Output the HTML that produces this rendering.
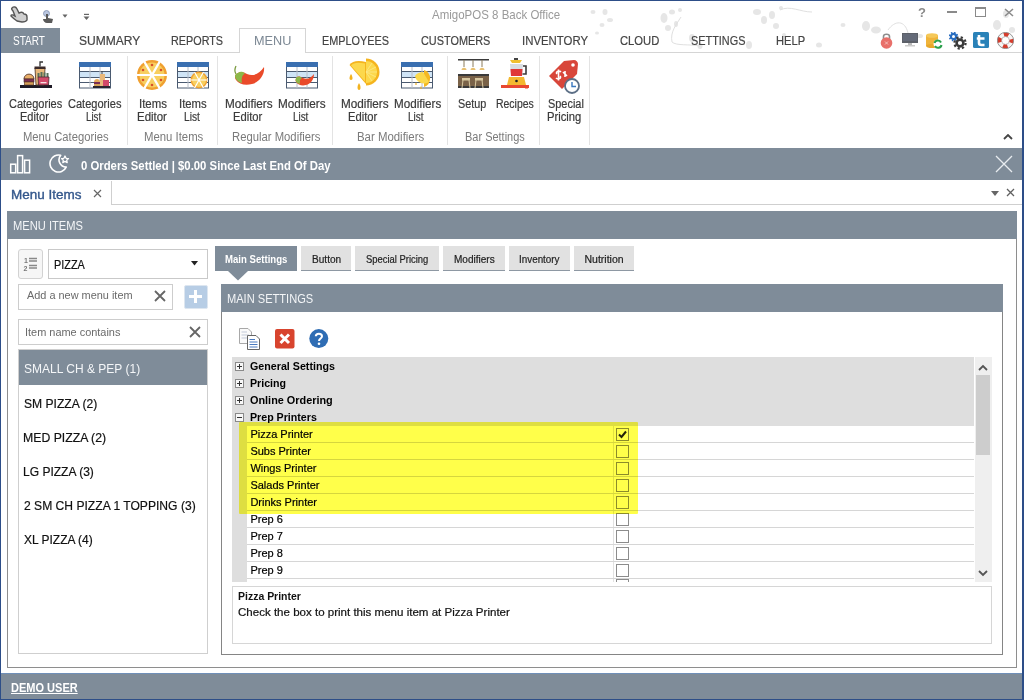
<!DOCTYPE html>
<html><head><meta charset="utf-8"><title>AmigoPOS 8 Back Office</title>
<style>
html,body{margin:0;padding:0;width:1024px;height:700px;overflow:hidden;background:#fff;font-family:'Liberation Sans', sans-serif;}
body{position:relative;}
</style></head><body>
<svg style="position:absolute;left:0px;top:0px;" width="1024" height="60" viewBox="0 0 1024 60"><ellipse cx="593" cy="12" rx="2.5" ry="2" fill="#e6e6e6"/><ellipse cx="605" cy="12" rx="2.5" ry="3" fill="#e6e6e6"/><ellipse cx="610" cy="20" rx="3" ry="2" fill="#e6e6e6"/><ellipse cx="602" cy="25" rx="2.5" ry="2" fill="#e6e6e6"/><ellipse cx="597" cy="33" rx="2" ry="1.5" fill="#e6e6e6"/><ellipse cx="664" cy="18" rx="3.5" ry="5" fill="#e6e6e6"/><ellipse cx="672" cy="12" rx="3" ry="2.5" fill="#e6e6e6"/><ellipse cx="680" cy="10" rx="2" ry="2" fill="#e6e6e6"/><ellipse cx="668" cy="28" rx="3" ry="3" fill="#e6e6e6"/><ellipse cx="676" cy="24" rx="2" ry="3" fill="#e6e6e6"/><ellipse cx="692" cy="38" rx="3" ry="4" fill="#e6e6e6"/><ellipse cx="700" cy="46" rx="2.5" ry="3" fill="#e6e6e6"/><ellipse cx="749" cy="45" rx="3" ry="4" fill="#e6e6e6"/><ellipse cx="757" cy="12" rx="4" ry="3" fill="#e6e6e6"/><ellipse cx="764" cy="20" rx="3" ry="4" fill="#e6e6e6"/><ellipse cx="772" cy="15" rx="3" ry="4" fill="#e6e6e6"/><ellipse cx="776" cy="26" rx="3" ry="3" fill="#e6e6e6"/><ellipse cx="781" cy="8" rx="2" ry="2" fill="#e6e6e6"/><ellipse cx="784" cy="35" rx="2" ry="2" fill="#e6e6e6"/><ellipse cx="819" cy="45" rx="3" ry="2.5" fill="#e6e6e6"/><ellipse cx="843" cy="25" rx="2.5" ry="2" fill="#e6e6e6"/><ellipse cx="866" cy="26" rx="4" ry="5" fill="#e6e6e6"/><ellipse cx="876" cy="30" rx="5" ry="3.5" fill="#e6e6e6"/><ellipse cx="997" cy="25" rx="4" ry="5" fill="#e6e6e6"/><ellipse cx="1006" cy="14" rx="3" ry="4" fill="#e6e6e6"/><ellipse cx="1012" cy="30" rx="3" ry="3" fill="#e6e6e6"/><ellipse cx="920" cy="36" rx="3" ry="2" fill="#e6e6e6"/><path d="M681 17 C676 25 670 32 672 42 C676 46 690 44 700 46 M780 10 C790 5 800 12 812 12 M888 30 C895 20 905 20 908 33" stroke="#e0e0e0" stroke-width="1" fill="none"/></svg>
<svg style="position:absolute;left:9px;top:5px;" width="20" height="18" viewBox="0 0 20 18"><path d="M3 3 C5 1 7 2 8 4 L10 8 C12 7 14 7 15 9 C17 9 18 10 18 12 L18 15 C17 17 15 17 13 17 L8 16 C5 14 3 12 2 11 C2 9 4 10 6 11 L4 6 C3 5 2 4 3 3 Z" fill="#cfcfcf" stroke="#555" stroke-width="1.4"/></svg>
<svg style="position:absolute;left:42px;top:10px;" width="12" height="14" viewBox="0 0 12 14"><circle cx="4.5" cy="3.5" r="3" fill="#b9c6e0" stroke="#8090b0" stroke-width="0.8"/><path d="M4 4 L4 9 L1 9 C1 11 3 13 5 13 L10 13 L11 9 L6 8 L6 4 Z" fill="#5a5a5a"/></svg>
<svg style="position:absolute;left:62px;top:14px;" width="6" height="4" viewBox="0 0 6 4"><path d="M0.5 0.5 L5.5 0.5 L3 3.8 Z" fill="#666"/></svg>
<svg style="position:absolute;left:83px;top:13px;" width="7" height="8" viewBox="0 0 7 8"><rect x="1" y="0.8" width="5" height="1.2" fill="#666"/><path d="M0.5 3.5 L6.5 3.5 L3.5 7 Z" fill="#666"/></svg>
<div style="position:absolute;left:432.00px;top:7.95px;font:400 13px/13px 'Liberation Sans', sans-serif;color:#9a9a9a;white-space:nowrap;transform:scaleX(0.8842);transform-origin:0 0;">AmigoPOS 8 Back Office</div>
<svg style="position:absolute;left:915px;top:5px;" width="14" height="14" viewBox="0 0 14 14"><text x="7" y="12" font-family="Liberation Sans" font-weight="700" font-size="13" fill="#8a8a8a" text-anchor="middle">?</text></svg>
<div style="position:absolute;left:947px;top:11px;width:10px;height:2px;background:#8a8a8a;"></div>
<div style="position:absolute;left:975px;top:7px;width:9px;height:8px;border:1px solid #8a8a8a;background:transparent;border-top-width:2px;height:7px;"></div>
<svg style="position:absolute;left:1004px;top:8px;" width="10" height="9" viewBox="0 0 10 9"><path d="M1 1 L9 8 M9 1 L1 8" stroke="#8a8a8a" stroke-width="1.6"/></svg>
<svg style="position:absolute;left:880px;top:32px;" width="13" height="17" viewBox="0 0 13 17"><path d="M3.5 7 L3.5 4.5 C3.5 1.5 9.5 1.5 9.5 4.5 L9.5 7" stroke="#8d8d8d" stroke-width="1.6" fill="none"/><circle cx="6.5" cy="11" r="5.8" fill="#e8706a"/><path d="M5 9.5 L8 12.5 M8 9.5 L5 12.5" stroke="#f6c0bc" stroke-width="1"/></svg>
<svg style="position:absolute;left:902px;top:33px;" width="17" height="15" viewBox="0 0 17 15"><rect x="0" y="0" width="16" height="10" fill="#5c6068"/><rect x="1" y="1" width="14" height="7" fill="#646a78"/><rect x="6" y="10" width="4" height="2" fill="#bbb"/><rect x="3" y="12" width="10" height="1.5" fill="#ccc"/></svg>
<svg style="position:absolute;left:926px;top:33px;" width="17" height="16" viewBox="0 0 17 16"><rect x="0" y="2" width="12" height="11" fill="#f0b43a"/><ellipse cx="6" cy="2.5" rx="6" ry="2.3" fill="#f5c858"/><ellipse cx="6" cy="13" rx="6" ry="2" fill="#e8a82a"/><circle cx="12" cy="11" r="4.5" fill="#fff"/><path d="M8.5 10 A3.5 3.5 0 0 1 15 9.5 M15.5 12 A3.5 3.5 0 0 1 9 13" stroke="#2aa04a" stroke-width="2" fill="none"/></svg>
<svg style="position:absolute;left:949px;top:32px;" width="18" height="18" viewBox="0 0 18 18"><circle cx="4.5" cy="4.5" r="2.6" fill="none" stroke="#2a6ec0" stroke-width="2.2"/><circle cx="4.5" cy="4.5" r="4" fill="none" stroke="#2a6ec0" stroke-width="1.6" stroke-dasharray="1.5 1.65"/><circle cx="11" cy="11" r="3.4" fill="none" stroke="#3a3a3a" stroke-width="2.6"/><circle cx="11" cy="11" r="5.6" fill="none" stroke="#3a3a3a" stroke-width="2.2" stroke-dasharray="2.2 2.2"/></svg>
<svg style="position:absolute;left:973px;top:32px;" width="17" height="16" viewBox="0 0 17 16"><rect x="0" y="0" width="16" height="16" rx="1.5" fill="#2a82b8"/><path d="M6 3 L6 11 C6 12.5 7 13 8.5 13 L11.5 13 M3.8 6.5 L11.5 6.5" stroke="#fff" stroke-width="2.6" fill="none"/></svg>
<svg style="position:absolute;left:997px;top:32px;" width="17" height="17" viewBox="0 0 17 17"><circle cx="8.5" cy="8.5" r="6" fill="none" stroke="#f6f6f6" stroke-width="4.2"/><circle cx="8.5" cy="8.5" r="6" fill="none" stroke="#d63c2c" stroke-width="4.2" stroke-dasharray="4.7 4.72" stroke-dashoffset="2.35"/><circle cx="8.5" cy="8.5" r="8.1" fill="none" stroke="#8a8a8a" stroke-width="0.9"/><circle cx="8.5" cy="8.5" r="3.9" fill="none" stroke="#9a9a9a" stroke-width="0.6"/></svg>
<div style="position:absolute;left:1px;top:28px;width:59px;height:25px;background:#7f8c99;"></div>
<div style="position:absolute;left:13.00px;top:33.95px;font:400 13px/13px 'Liberation Sans', sans-serif;color:#ffffff;white-space:nowrap;transform:scaleX(0.7716);transform-origin:0 0;">START</div>
<div style="position:absolute;left:60px;top:52px;width:963px;height:1px;background:#d5d5d5;"></div>
<div style="position:absolute;left:239px;top:28px;width:65px;height:24px;border:1px solid #d5d5d5;border-bottom:none;background:#fff;"></div>
<div style="position:absolute;left:79.00px;top:33.95px;font:400 13px/13px 'Liberation Sans', sans-serif;color:#444;white-space:nowrap;transform:scaleX(0.9257);transform-origin:0 0;-webkit-text-stroke:0.2px #444;">SUMMARY</div>
<div style="position:absolute;left:171.17px;top:33.95px;font:400 13px/13px 'Liberation Sans', sans-serif;color:#444;white-space:nowrap;transform:scaleX(0.8315);transform-origin:0 0;-webkit-text-stroke:0.2px #444;">REPORTS</div>
<div style="position:absolute;left:253.72px;top:33.95px;font:400 13px/13px 'Liberation Sans', sans-serif;color:#7c8894;white-space:nowrap;transform:scaleX(0.9759);transform-origin:0 0;">MENU</div>
<div style="position:absolute;left:321.66px;top:33.95px;font:400 13px/13px 'Liberation Sans', sans-serif;color:#444;white-space:nowrap;transform:scaleX(0.8362);transform-origin:0 0;-webkit-text-stroke:0.2px #444;">EMPLOYEES</div>
<div style="position:absolute;left:421.00px;top:33.95px;font:400 13px/13px 'Liberation Sans', sans-serif;color:#444;white-space:nowrap;transform:scaleX(0.8370);transform-origin:0 0;-webkit-text-stroke:0.2px #444;">CUSTOMERS</div>
<div style="position:absolute;left:521.62px;top:33.95px;font:400 13px/13px 'Liberation Sans', sans-serif;color:#444;white-space:nowrap;transform:scaleX(0.8768);transform-origin:0 0;-webkit-text-stroke:0.2px #444;">INVENTORY</div>
<div style="position:absolute;left:620.30px;top:33.95px;font:400 13px/13px 'Liberation Sans', sans-serif;color:#444;white-space:nowrap;transform:scaleX(0.8644);transform-origin:0 0;-webkit-text-stroke:0.2px #444;">CLOUD</div>
<div style="position:absolute;left:690.60px;top:33.95px;font:400 13px/13px 'Liberation Sans', sans-serif;color:#444;white-space:nowrap;transform:scaleX(0.8372);transform-origin:0 0;-webkit-text-stroke:0.2px #444;">SETTINGS</div>
<div style="position:absolute;left:776.14px;top:33.95px;font:400 13px/13px 'Liberation Sans', sans-serif;color:#444;white-space:nowrap;transform:scaleX(0.8579);transform-origin:0 0;-webkit-text-stroke:0.2px #444;">HELP</div>
<div style="position:absolute;left:127px;top:56px;width:1px;height:89px;background:#e3e3e3;"></div>
<div style="position:absolute;left:217px;top:56px;width:1px;height:89px;background:#e3e3e3;"></div>
<div style="position:absolute;left:332px;top:56px;width:1px;height:89px;background:#e3e3e3;"></div>
<div style="position:absolute;left:447px;top:56px;width:1px;height:89px;background:#e3e3e3;"></div>
<div style="position:absolute;left:539px;top:56px;width:1px;height:89px;background:#e3e3e3;"></div>
<div style="position:absolute;left:589px;top:56px;width:1px;height:89px;background:#e3e3e3;"></div>
<div style="position:absolute;left:8.90px;top:97.60px;font:400 12px/12px 'Liberation Sans', sans-serif;color:#3a3a3a;white-space:nowrap;transform:scaleX(0.9167);transform-origin:0 0;-webkit-text-stroke:0.2px #3a3a3a;">Categories</div>
<div style="position:absolute;left:19.90px;top:110.60px;font:400 12px/12px 'Liberation Sans', sans-serif;color:#3a3a3a;white-space:nowrap;transform:scaleX(0.9186);transform-origin:0 0;-webkit-text-stroke:0.2px #3a3a3a;">Editor</div>
<div style="position:absolute;left:68.00px;top:97.60px;font:400 12px/12px 'Liberation Sans', sans-serif;color:#3a3a3a;white-space:nowrap;transform:scaleX(0.9202);transform-origin:0 0;-webkit-text-stroke:0.2px #3a3a3a;">Categories</div>
<div style="position:absolute;left:85.50px;top:110.60px;font:400 12px/12px 'Liberation Sans', sans-serif;color:#3a3a3a;white-space:nowrap;transform:scaleX(0.8118);transform-origin:0 0;-webkit-text-stroke:0.2px #3a3a3a;">List</div>
<div style="position:absolute;left:22.70px;top:131.00px;font:400 12px/12px 'Liberation Sans', sans-serif;color:#7a7a7a;white-space:nowrap;transform:scaleX(0.9367);transform-origin:0 0;">Menu Categories</div>
<div style="position:absolute;left:138.95px;top:97.60px;font:400 12px/12px 'Liberation Sans', sans-serif;color:#3a3a3a;white-space:nowrap;transform:scaleX(0.9528);transform-origin:0 0;-webkit-text-stroke:0.2px #3a3a3a;">Items</div>
<div style="position:absolute;left:137.00px;top:110.60px;font:400 12px/12px 'Liberation Sans', sans-serif;color:#3a3a3a;white-space:nowrap;transform:scaleX(0.9537);transform-origin:0 0;-webkit-text-stroke:0.2px #3a3a3a;">Editor</div>
<div style="position:absolute;left:179.06px;top:97.60px;font:400 12px/12px 'Liberation Sans', sans-serif;color:#3a3a3a;white-space:nowrap;transform:scaleX(0.9422);transform-origin:0 0;-webkit-text-stroke:0.2px #3a3a3a;">Items</div>
<div style="position:absolute;left:184.00px;top:110.60px;font:400 12px/12px 'Liberation Sans', sans-serif;color:#3a3a3a;white-space:nowrap;transform:scaleX(0.8480);transform-origin:0 0;-webkit-text-stroke:0.2px #3a3a3a;">List</div>
<div style="position:absolute;left:143.70px;top:131.00px;font:400 12px/12px 'Liberation Sans', sans-serif;color:#7a7a7a;white-space:nowrap;transform:scaleX(0.9459);transform-origin:0 0;">Menu Items</div>
<div style="position:absolute;left:225.20px;top:97.60px;font:400 12px/12px 'Liberation Sans', sans-serif;color:#3a3a3a;white-space:nowrap;transform:scaleX(0.9778);transform-origin:0 0;-webkit-text-stroke:0.2px #3a3a3a;">Modifiers</div>
<div style="position:absolute;left:232.70px;top:110.60px;font:400 12px/12px 'Liberation Sans', sans-serif;color:#3a3a3a;white-space:nowrap;transform:scaleX(0.9346);transform-origin:0 0;-webkit-text-stroke:0.2px #3a3a3a;">Editor</div>
<div style="position:absolute;left:278.40px;top:97.60px;font:400 12px/12px 'Liberation Sans', sans-serif;color:#3a3a3a;white-space:nowrap;transform:scaleX(0.9778);transform-origin:0 0;-webkit-text-stroke:0.2px #3a3a3a;">Modifiers</div>
<div style="position:absolute;left:292.50px;top:110.60px;font:400 12px/12px 'Liberation Sans', sans-serif;color:#3a3a3a;white-space:nowrap;transform:scaleX(0.8221);transform-origin:0 0;-webkit-text-stroke:0.2px #3a3a3a;">List</div>
<div style="position:absolute;left:231.60px;top:131.00px;font:400 12px/12px 'Liberation Sans', sans-serif;color:#7a7a7a;white-space:nowrap;transform:scaleX(0.9411);transform-origin:0 0;">Regular Modifiers</div>
<div style="position:absolute;left:340.50px;top:97.60px;font:400 12px/12px 'Liberation Sans', sans-serif;color:#3a3a3a;white-space:nowrap;transform:scaleX(0.9778);transform-origin:0 0;-webkit-text-stroke:0.2px #3a3a3a;">Modifiers</div>
<div style="position:absolute;left:348.30px;top:110.60px;font:400 12px/12px 'Liberation Sans', sans-serif;color:#3a3a3a;white-space:nowrap;transform:scaleX(0.9346);transform-origin:0 0;-webkit-text-stroke:0.2px #3a3a3a;">Editor</div>
<div style="position:absolute;left:393.50px;top:97.60px;font:400 12px/12px 'Liberation Sans', sans-serif;color:#3a3a3a;white-space:nowrap;transform:scaleX(0.9717);transform-origin:0 0;-webkit-text-stroke:0.2px #3a3a3a;">Modifiers</div>
<div style="position:absolute;left:407.60px;top:110.60px;font:400 12px/12px 'Liberation Sans', sans-serif;color:#3a3a3a;white-space:nowrap;transform:scaleX(0.8325);transform-origin:0 0;-webkit-text-stroke:0.2px #3a3a3a;">List</div>
<div style="position:absolute;left:357.20px;top:131.00px;font:400 12px/12px 'Liberation Sans', sans-serif;color:#7a7a7a;white-space:nowrap;transform:scaleX(0.9507);transform-origin:0 0;">Bar Modifiers</div>
<div style="position:absolute;left:458.30px;top:97.60px;font:400 12px/12px 'Liberation Sans', sans-serif;color:#3a3a3a;white-space:nowrap;transform:scaleX(0.9026);transform-origin:0 0;-webkit-text-stroke:0.2px #3a3a3a;">Setup</div>
<div style="position:absolute;left:495.50px;top:97.60px;font:400 12px/12px 'Liberation Sans', sans-serif;color:#3a3a3a;white-space:nowrap;transform:scaleX(0.8719);transform-origin:0 0;-webkit-text-stroke:0.2px #3a3a3a;">Recipes</div>
<div style="position:absolute;left:464.60px;top:131.00px;font:400 12px/12px 'Liberation Sans', sans-serif;color:#7a7a7a;white-space:nowrap;transform:scaleX(0.9148);transform-origin:0 0;">Bar Settings</div>
<div style="position:absolute;left:547.80px;top:97.60px;font:400 12px/12px 'Liberation Sans', sans-serif;color:#3a3a3a;white-space:nowrap;transform:scaleX(0.9098);transform-origin:0 0;-webkit-text-stroke:0.2px #3a3a3a;">Special</div>
<div style="position:absolute;left:547.30px;top:110.60px;font:400 12px/12px 'Liberation Sans', sans-serif;color:#3a3a3a;white-space:nowrap;transform:scaleX(0.9360);transform-origin:0 0;-webkit-text-stroke:0.2px #3a3a3a;">Pricing</div>
<svg style="position:absolute;left:1003px;top:134px;" width="10" height="6" viewBox="0 0 10 6"><path d="M1 5 L5 1 L9 5" stroke="#444" stroke-width="1.8" fill="none"/></svg>
<svg style="position:absolute;left:19px;top:60px;" width="34" height="29" viewBox="0 0 34 29"><rect x="1" y="25" width="32" height="3" fill="#1e1a26"/><path d="M5 19 C5 12.5 15 12.5 15 19 Z" fill="#eab06a" stroke="#5a3a2a" stroke-width="0.9"/><rect x="5" y="19" width="10" height="3" fill="#7b2e52" stroke="#4a2a30" stroke-width="0.6"/><rect x="5.3" y="22" width="9.4" height="3" fill="#d6a058" stroke="#5a3a2a" stroke-width="0.6"/><path d="M16 8 H26 L25 25 H17 Z" fill="#e8b87a" stroke="#5a4030" stroke-width="0.9"/><rect x="15.5" y="6.5" width="11" height="2.5" fill="#3a2a2a"/><path d="M21 6.5 V2 H24" stroke="#333" stroke-width="1.3" fill="none"/><path d="M19.5 13 V17 M22.5 12 V17 M25.5 12.5 V17 M28.5 13 V17" stroke="#56705a" stroke-width="2"/><path d="M19 17 H30 L29.5 25 H19.5 Z" fill="#d24a6a" stroke="#4a2a30" stroke-width="0.8"/><rect x="21.5" y="22" width="6" height="1.3" fill="#f8e0e4"/></svg>
<svg style="position:absolute;left:79px;top:62px;" width="32" height="27" viewBox="0 0 32 27"><rect x="0.5" y="0.5" width="31" height="25.5" fill="#fff" stroke="#4a5a70" stroke-width="1"/><rect x="0" y="0" width="32" height="5" fill="#3a6fb0"/><rect x="1" y="10" width="30" height="5" fill="#cfe4f6"/><path d="M1 9.5 H31 M1 15.5 H31 M1 20.5 H31" stroke="#4a5a70" stroke-width="1" fill="none"/><path d="M11 5 V26 M21 5 V26" stroke="#b8bec8" stroke-width="1" fill="none"/></svg>
<svg style="position:absolute;left:93px;top:70px;" width="17" height="18" viewBox="0 0 17 18"><rect x="0" y="16" width="17" height="2" fill="#2a2630"/><path d="M1 12 C1 8 7 8 7 12 Z" fill="#e6ac5c"/><rect x="1" y="12" width="6" height="2" fill="#7b2e52"/><rect x="1" y="14" width="6" height="2" fill="#d6a058"/><rect x="7" y="4" width="5" height="12" fill="#e8b87a"/><rect x="10" y="10" width="6" height="6" fill="#d24a6a"/><path d="M9 4 V1" stroke="#444" stroke-width="1"/></svg>
<svg style="position:absolute;left:136px;top:59px;" width="32" height="32" viewBox="0 0 32 32"><circle cx="16" cy="16" r="15" fill="#f0a030"/><circle cx="16" cy="16" r="12.5" fill="#f8cf60"/><path d="M0 16 H32 M8 2.1 L24 29.9 M24 2.1 L8 29.9" stroke="#fff" stroke-width="2.2"/><g fill="#d8502a"><circle cx="16" cy="6" r="1.3"/><circle cx="25" cy="11" r="1.3"/><circle cx="25" cy="21" r="1.3"/><circle cx="16" cy="26" r="1.3"/><circle cx="7" cy="21" r="1.3"/><circle cx="7" cy="11" r="1.3"/></g></svg>
<svg style="position:absolute;left:177px;top:62px;" width="32" height="27" viewBox="0 0 32 27"><rect x="0.5" y="0.5" width="31" height="25.5" fill="#fff" stroke="#4a5a70" stroke-width="1"/><rect x="0" y="0" width="32" height="5" fill="#3a6fb0"/><rect x="1" y="10" width="30" height="5" fill="#cfe4f6"/><path d="M1 9.5 H31 M1 15.5 H31 M1 20.5 H31" stroke="#4a5a70" stroke-width="1" fill="none"/><path d="M11 5 V26 M21 5 V26" stroke="#b8bec8" stroke-width="1" fill="none"/></svg>
<svg style="position:absolute;left:190px;top:71px;" width="18" height="18" viewBox="0 0 18 18"><circle cx="9" cy="9" r="8.5" fill="#f0a030"/><circle cx="9" cy="9" r="7" fill="#f8cf60"/><path d="M0 9 H18 M4.5 1 L13.5 17 M13.5 1 L4.5 17" stroke="#fff" stroke-width="1.2"/></svg>
<svg style="position:absolute;left:230px;top:64px;" width="36" height="24" viewBox="0 0 36 24"><path d="M8 9 C10 7 14 8 17 10 C24 13 30 9 34 3 C35 10 30 18 22 20 C15 22 9 20 6 16 C4 13 5 10 8 9 Z" fill="#ea4a2a"/><path d="M8 9 C10 7 13 7.5 15 9.5 C12 11 11 15 12 19 C8 18 5 15 5 12 C5 10.5 6.5 9.5 8 9 Z" fill="#8cb848"/><path d="M6 10 C4 7 5 4 6 2" stroke="#7a9a40" stroke-width="1.3" fill="none"/></svg>
<svg style="position:absolute;left:286px;top:62px;" width="32" height="27" viewBox="0 0 32 27"><rect x="0.5" y="0.5" width="31" height="25.5" fill="#fff" stroke="#4a5a70" stroke-width="1"/><rect x="0" y="0" width="32" height="5" fill="#3a6fb0"/><rect x="1" y="10" width="30" height="5" fill="#cfe4f6"/><path d="M1 9.5 H31 M1 15.5 H31 M1 20.5 H31" stroke="#4a5a70" stroke-width="1" fill="none"/><path d="M11 5 V26 M21 5 V26" stroke="#b8bec8" stroke-width="1" fill="none"/></svg>
<svg style="position:absolute;left:293px;top:73px;" width="22" height="15" viewBox="0 0 22 15"><path d="M4 4 C6 3 8 4 10 5 C14 7 18 5 21 1 C21 6 18 11 13 12 C9 13 5 12 3 9 C2 7 3 5 4 4 Z" fill="#ea4a2a"/><path d="M4 4 C6 3 7.5 3.5 9 5 C7 6 6.5 8 7 11 C4.5 10.5 3 9 2.5 7.5 C2.5 6 3 4.5 4 4 Z" fill="#8cb848"/></svg>
<svg style="position:absolute;left:346px;top:57px;" width="36" height="34" viewBox="0 0 36 34"><path d="M3.5 8 C6 4 12 3 20 5 L20 27 Z" fill="#f5b41e"/><path d="M5 8.5 C7.5 5.5 12 5 19 6.5 L19 24.5 Z" fill="#fcd84c"/><path d="M20 1.5 A13.5 13.5 0 0 1 20 28.5 Z" fill="#f5b41e"/><path d="M20 4 A11 11 0 0 1 20 26 Z" fill="#fcd84c"/><path d="M20 15 L30 10 M20 15 L31 15 M20 15 L30 20 M20 15 L26 6 M20 15 L26 24" stroke="#fde98a" stroke-width="0.8"/><path d="M5 17 C3 20 3 23 5 23 C7 23 7 20 5 17 Z" fill="#f2b21e"/><path d="M13 26 C11 29 11 33 13 33 C15 33 15 29 13 26 Z" fill="#f2b21e"/></svg>
<svg style="position:absolute;left:401px;top:62px;" width="32" height="27" viewBox="0 0 32 27"><rect x="0.5" y="0.5" width="31" height="25.5" fill="#fff" stroke="#4a5a70" stroke-width="1"/><rect x="0" y="0" width="32" height="5" fill="#3a6fb0"/><rect x="1" y="10" width="30" height="5" fill="#cfe4f6"/><path d="M1 9.5 H31 M1 15.5 H31 M1 20.5 H31" stroke="#4a5a70" stroke-width="1" fill="none"/><path d="M11 5 V26 M21 5 V26" stroke="#b8bec8" stroke-width="1" fill="none"/></svg>
<svg style="position:absolute;left:414px;top:69px;" width="20" height="20" viewBox="0 0 20 20"><path d="M10 1 A9 9 0 0 1 10 18 Z" fill="#f5b820"/><path d="M1 7 A9 9 0 0 0 15 13 L9 3 C6 3 3 4 1 7 Z" fill="#fbd84a"/><path d="M2 13 C1 15 1 16 2 16 C3 16 3 15 2 13 Z" fill="#f0b020"/><path d="M7 17 C6 19 6 20 7 20 C8 20 8 19 7 17 Z" fill="#f0b020"/></svg>
<svg style="position:absolute;left:457px;top:58px;" width="33" height="33" viewBox="0 0 33 33"><rect x="1" y="1" width="31" height="1.5" fill="#3a3a3a"/><path d="M7 2 V9 M16 2 V9 M25 2 V9" stroke="#8a7a5a" stroke-width="1"/><g fill="#e8c070"><path d="M4.5 12 C4.5 9 9.5 9 9.5 12 Z"/><path d="M13.5 12 C13.5 9 18.5 9 18.5 12 Z"/><path d="M22.5 12 C22.5 9 27.5 9 27.5 12 Z"/></g><rect x="1" y="16" width="31" height="2" fill="#3a3a3a"/><rect x="1" y="18" width="31" height="10" fill="#7a6248"/><rect x="1" y="28" width="31" height="2" fill="#3a3a3a"/><g fill="#d8c8a0"><rect x="5" y="20" width="8" height="2.5"/><rect x="18" y="20" width="8" height="2.5"/></g><path d="M6 22 L5 30 M12 22 L13 30 M19 22 L18 30 M25 22 L26 30" stroke="#d8c8a0" stroke-width="1"/></svg>
<svg style="position:absolute;left:497px;top:57px;" width="35" height="34" viewBox="0 0 35 34"><path d="M13 3 H25 L23 6 H15 Z" fill="#f0c030"/><rect x="17" y="1" width="4" height="2" fill="#444"/><path d="M13 7 H26 L25 19 H14 Z" fill="#d8dde2"/><path d="M13.5 12 H25.5 L25 19 H14 Z" fill="#e03838"/><path d="M26 9 H29 V17 H25.5" stroke="#3a3a3a" stroke-width="1.6" fill="none"/><path d="M12 20 H27 L29 28 H10 Z" fill="#f4b830"/><circle cx="19.5" cy="24" r="1.3" fill="#222"/><rect x="4" y="28" width="28" height="3" fill="#e84830"/><rect x="28" y="30" width="3" height="1.5" fill="#e84830"/></svg>
<svg style="position:absolute;left:543px;top:58px;" width="40" height="36" viewBox="0 0 40 36"><path d="M6 18 L21 3 L31 2 C33 2 35 4 35 6 L34 16 L19 31 Z" fill="#d8463a"/><circle cx="30" cy="7" r="1.8" fill="#fff"/><path d="M14 16 C12 14 16 12 18 14 M13 20 C15 22 19 20 17 18 M15.5 11.5 L15.5 22.5 M20 14 L24 18 M22 13 L22 19" stroke="#fff" stroke-width="1.6" fill="none"/><circle cx="29" cy="28" r="7" fill="#fff" stroke="#5c6f86" stroke-width="1.8"/><path d="M29 24 V28.5 H33" stroke="#3a78c0" stroke-width="1.4" fill="none"/></svg>
<div style="position:absolute;left:1px;top:148px;width:1022px;height:32px;background:#7f8c99;"></div>
<svg style="position:absolute;left:9px;top:154px;" width="23" height="20" viewBox="0 0 23 20"><rect x="1.7" y="10.2" width="5" height="8.6" fill="none" stroke="#fff" stroke-width="1.5"/><rect x="8.6" y="1.6" width="5" height="17.2" fill="none" stroke="#fff" stroke-width="1.5"/><rect x="15.6" y="6.2" width="5" height="12.6" fill="none" stroke="#fff" stroke-width="1.5"/></svg>
<svg style="position:absolute;left:49px;top:153px;" width="22" height="22" viewBox="0 0 22 22"><path d="M11.7 2.3 A8.5 8.5 0 1 0 17.2 14.1 A7.2 7.2 0 0 1 11.7 2.3 Z" fill="none" stroke="#fff" stroke-width="1.6" stroke-linejoin="round"/><path d="M16 3 L17.1 5.3 L19.5 5.6 L17.7 7.2 L18.2 9.6 L16 8.4 L13.8 9.6 L14.3 7.2 L12.5 5.6 L14.9 5.3 Z" fill="none" stroke="#fff" stroke-width="1.3" stroke-linejoin="round"/></svg>
<div style="position:absolute;left:81.40px;top:159.25px;font:700 13px/13px 'Liberation Sans', sans-serif;color:#ffffff;white-space:nowrap;transform:scaleX(0.8721);transform-origin:0 0;">0 Orders Settled | $0.00 Since Last End Of Day</div>
<svg style="position:absolute;left:995px;top:155px;" width="18" height="18" viewBox="0 0 18 18"><path d="M1 1 L17 17 M17 1 L1 17" stroke="#e8ecf0" stroke-width="1.3"/></svg>
<div style="position:absolute;left:111px;top:181px;width:1px;height:24px;background:#cfcfcf;"></div>
<div style="position:absolute;left:111px;top:204px;width:912px;height:1px;background:#cfcfcf;"></div>
<div style="position:absolute;left:10.52px;top:188.78px;font:400 12.5px/12.5px 'Liberation Sans', sans-serif;color:#33578c;white-space:nowrap;transform:scaleX(1.0788);transform-origin:0 0;-webkit-text-stroke:0.2px #33578c;-webkit-text-stroke:0.35px #33578c;">Menu Items</div>
<svg style="position:absolute;left:93px;top:189px;" width="9" height="9" viewBox="0 0 9 9"><path d="M1 1 L8 8 M8 1 L1 8" stroke="#666" stroke-width="1.2"/></svg>
<svg style="position:absolute;left:991px;top:191px;" width="9" height="6" viewBox="0 0 9 6"><path d="M0 0 L8 0 L4 5 Z" fill="#666"/></svg>
<svg style="position:absolute;left:1006px;top:188px;" width="9" height="9" viewBox="0 0 9 9"><path d="M1 1 L8 8 M8 1 L1 8" stroke="#606060" stroke-width="1.3"/></svg>
<div style="position:absolute;left:7px;top:211px;width:1008px;height:456px;border:1px solid #8e8e8e;border-top:none;"></div>
<div style="position:absolute;left:7px;top:211px;width:1010px;height:28px;background:#7f8c99;"></div>
<div style="position:absolute;left:12.61px;top:220.18px;font:400 12.5px/12.5px 'Liberation Sans', sans-serif;color:#f4f6f8;white-space:nowrap;transform:scaleX(0.8919);transform-origin:0 0;">MENU ITEMS</div>
<div style="position:absolute;left:18px;top:249px;width:23px;height:28px;border:1px solid #d2d2d2;border-radius:3px;background:#f6f6f6;"></div>
<svg style="position:absolute;left:23px;top:256px;" width="15" height="16" viewBox="0 0 15 16"><text x="1" y="7" font-family="Liberation Sans" font-weight="700" font-size="7" fill="#777">1</text><text x="0.5" y="14.5" font-family="Liberation Sans" font-weight="700" font-size="7" fill="#777">2</text><path d="M6 2.5 H14 M6 5 H14 M6 9.5 H14 M6 12 H14" stroke="#888" stroke-width="1.3"/></svg>
<div style="position:absolute;left:48px;top:249px;width:158px;height:28px;border:1px solid #c9c9c9;background:#fff;"></div>
<div style="position:absolute;left:53.63px;top:258.57px;font:400 12.5px/12.5px 'Liberation Sans', sans-serif;color:#111;white-space:nowrap;transform:scaleX(0.8694);transform-origin:0 0;-webkit-text-stroke:0.2px #111;">PIZZA</div>
<svg style="position:absolute;left:191px;top:261px;" width="8" height="5" viewBox="0 0 8 5"><path d="M0 0 L7 0 L3.5 4.5 Z" fill="#222"/></svg>
<div style="position:absolute;left:18px;top:284px;width:153px;height:24px;border:1px solid #cdcdcd;background:#fff;"></div>
<div style="position:absolute;left:26.60px;top:289.83px;font:400 11.5px/11.5px 'Liberation Sans', sans-serif;color:#6a6a6a;white-space:nowrap;transform:scaleX(0.9490);transform-origin:0 0;">Add a new menu item</div>
<svg style="position:absolute;left:154px;top:290px;" width="12" height="12" viewBox="0 0 12 12"><path d="M1 1 L11 11 M11 1 L1 11" stroke="#666" stroke-width="1.8"/></svg>
<div style="position:absolute;left:184px;top:285px;width:22px;height:22px;border:1px solid #dde6f0;border-radius:2px;background:#b7cde5;"></div>
<svg style="position:absolute;left:188px;top:289px;" width="15" height="15" viewBox="0 0 15 15"><path d="M7.5 1 V14 M1 7.5 H14" stroke="#fff" stroke-width="3"/></svg>
<div style="position:absolute;left:18px;top:319px;width:188px;height:24px;border:1px solid #cdcdcd;background:#fff;"></div>
<div style="position:absolute;left:25.45px;top:327.03px;font:400 11.5px/11.5px 'Liberation Sans', sans-serif;color:#6a6a6a;white-space:nowrap;transform:scaleX(0.9508);transform-origin:0 0;">Item name contains</div>
<svg style="position:absolute;left:189px;top:326px;" width="12" height="12" viewBox="0 0 12 12"><path d="M1 1 L11 11 M11 1 L1 11" stroke="#666" stroke-width="1.8"/></svg>
<div style="position:absolute;left:18px;top:349px;width:188px;height:303px;border:1px solid #cfcfcf;background:#fff;"></div>
<div style="position:absolute;left:19px;top:350px;width:188px;height:35px;background:#7f8c99;"></div>
<div style="position:absolute;left:24.00px;top:362.15px;font:400 13px/13px 'Liberation Sans', sans-serif;color:#f4f6f8;white-space:nowrap;transform:scaleX(0.9239);transform-origin:0 0;">SMALL CH &amp; PEP (1)</div>
<div style="position:absolute;left:24.10px;top:397.98px;font:400 12.5px/12.5px 'Liberation Sans', sans-serif;color:#111;white-space:nowrap;transform:scaleX(0.9681);transform-origin:0 0;-webkit-text-stroke:0.2px #111;">SM PIZZA (2)</div>
<div style="position:absolute;left:23.12px;top:431.68px;font:400 12.5px/12.5px 'Liberation Sans', sans-serif;color:#111;white-space:nowrap;transform:scaleX(0.9803);transform-origin:0 0;-webkit-text-stroke:0.2px #111;">MED PIZZA (2)</div>
<div style="position:absolute;left:23.14px;top:465.68px;font:400 12.5px/12.5px 'Liberation Sans', sans-serif;color:#111;white-space:nowrap;transform:scaleX(0.9624);transform-origin:0 0;-webkit-text-stroke:0.2px #111;">LG PIZZA (3)</div>
<div style="position:absolute;left:24.10px;top:499.68px;font:400 12.5px/12.5px 'Liberation Sans', sans-serif;color:#111;white-space:nowrap;transform:scaleX(0.9679);transform-origin:0 0;-webkit-text-stroke:0.2px #111;">2 SM CH PIZZA 1 TOPPING (3)</div>
<div style="position:absolute;left:24.10px;top:533.98px;font:400 12.5px/12.5px 'Liberation Sans', sans-serif;color:#111;white-space:nowrap;transform:scaleX(0.9578);transform-origin:0 0;-webkit-text-stroke:0.2px #111;">XL PIZZA (4)</div>
<div style="position:absolute;left:215px;top:246px;width:82px;height:25px;background:#7f8c99;"></div>
<svg style="position:absolute;left:228px;top:271px;" width="20" height="10" viewBox="0 0 20 10"><path d="M0 0 L20 0 L10 9.5 Z" fill="#7f8c99"/></svg>
<div style="position:absolute;left:225.00px;top:254.07px;font:700 10.5px/10.5px 'Liberation Sans', sans-serif;color:#ffffff;white-space:nowrap;transform:scaleX(0.9135);transform-origin:0 0;">Main Settings</div>
<div style="position:absolute;left:301px;top:246px;width:50px;height:24px;background:#e1e1e1;border-bottom:1px solid #8e98a3;"></div>
<div style="position:absolute;left:311.90px;top:254.07px;font:400 10.5px/10.5px 'Liberation Sans', sans-serif;color:#222;white-space:nowrap;transform:scaleX(0.9601);transform-origin:0 0;-webkit-text-stroke:0.2px #222;">Button</div>
<div style="position:absolute;left:355px;top:246px;width:84px;height:24px;background:#e1e1e1;border-bottom:1px solid #8e98a3;"></div>
<div style="position:absolute;left:365.50px;top:254.07px;font:400 10.5px/10.5px 'Liberation Sans', sans-serif;color:#222;white-space:nowrap;transform:scaleX(0.8979);transform-origin:0 0;-webkit-text-stroke:0.2px #222;">Special Pricing</div>
<div style="position:absolute;left:443px;top:246px;width:62px;height:24px;background:#e1e1e1;border-bottom:1px solid #8e98a3;"></div>
<div style="position:absolute;left:453.75px;top:254.07px;font:400 10.5px/10.5px 'Liberation Sans', sans-serif;color:#222;white-space:nowrap;transform:scaleX(0.9564);transform-origin:0 0;-webkit-text-stroke:0.2px #222;">Modifiers</div>
<div style="position:absolute;left:509px;top:246px;width:61px;height:24px;background:#e1e1e1;border-bottom:1px solid #8e98a3;"></div>
<div style="position:absolute;left:518.75px;top:254.07px;font:400 10.5px/10.5px 'Liberation Sans', sans-serif;color:#222;white-space:nowrap;transform:scaleX(0.9388);transform-origin:0 0;-webkit-text-stroke:0.2px #222;">Inventory</div>
<div style="position:absolute;left:574px;top:246px;width:60px;height:24px;background:#e1e1e1;border-bottom:1px solid #8e98a3;"></div>
<div style="position:absolute;left:584.50px;top:254.07px;font:400 10.5px/10.5px 'Liberation Sans', sans-serif;color:#222;white-space:nowrap;-webkit-text-stroke:0.2px #222;">Nutrition</div>
<div style="position:absolute;left:221px;top:284px;width:780px;height:370px;border:1px solid #858585;border-top:none;"></div>
<div style="position:absolute;left:221px;top:284px;width:782px;height:28px;background:#7f8c99;"></div>
<div style="position:absolute;left:226.61px;top:292.98px;font:400 12.5px/12.5px 'Liberation Sans', sans-serif;color:#f4f6f8;white-space:nowrap;transform:scaleX(0.8864);transform-origin:0 0;">MAIN SETTINGS</div>
<svg style="position:absolute;left:238px;top:327px;" width="23" height="24" viewBox="0 0 23 24"><path d="M1.5 1.5 H10 L13.5 5 V16.5 H1.5 Z" fill="#fafafa" stroke="#a8a8a8" stroke-width="1"/><path d="M3.5 5 H9 M3.5 8 H11 M3.5 11 H11" stroke="#c0c8d8" stroke-width="1"/><path d="M9.5 8.5 H18 L21.5 12 V22.5 H9.5 Z" fill="#fff" stroke="#666" stroke-width="1"/><path d="M11.5 12.5 H17 M11.5 15 H19.5 M11.5 17.5 H19.5 M11.5 20 H19.5" stroke="#4a7ac0" stroke-width="1"/></svg>
<svg style="position:absolute;left:275px;top:329px;" width="20" height="20" viewBox="0 0 20 20"><rect x="0" y="0" width="19.5" height="19.5" rx="2" fill="#d8442e"/><path d="M5.5 5.5 L14 14 M14 5.5 L5.5 14" stroke="#fff" stroke-width="3"/></svg>
<svg style="position:absolute;left:309px;top:329px;" width="20" height="20" viewBox="0 0 20 20"><circle cx="9.8" cy="9.6" r="9.5" fill="#2f6db4"/><path d="M6.8 7.2 C6.8 3.8 13 3.8 13 7.2 C13 9.4 10 9.6 10 12" stroke="#fff" stroke-width="2" fill="none"/><circle cx="10" cy="14.8" r="1.3" fill="#fff"/></svg>
<div style="position:absolute;left:232px;top:357px;width:742px;height:225px;background:#dedede;"></div>
<div style="position:absolute;left:247px;top:426px;width:727px;height:156px;background:#ffffff;"></div>
<div style="position:absolute;left:613px;top:426px;width:1px;height:156px;background:#e2e2e2;"></div>
<div style="position:absolute;left:247px;top:442px;width:727px;height:1px;background:#d6d6d6;"></div>
<div style="position:absolute;left:247px;top:459px;width:727px;height:1px;background:#d6d6d6;"></div>
<div style="position:absolute;left:247px;top:476px;width:727px;height:1px;background:#d6d6d6;"></div>
<div style="position:absolute;left:247px;top:493px;width:727px;height:1px;background:#d6d6d6;"></div>
<div style="position:absolute;left:247px;top:510px;width:727px;height:1px;background:#d6d6d6;"></div>
<div style="position:absolute;left:247px;top:527px;width:727px;height:1px;background:#d6d6d6;"></div>
<div style="position:absolute;left:247px;top:544px;width:727px;height:1px;background:#d6d6d6;"></div>
<div style="position:absolute;left:247px;top:561px;width:727px;height:1px;background:#d6d6d6;"></div>
<div style="position:absolute;left:247px;top:578px;width:727px;height:1px;background:#d6d6d6;"></div>
<svg style="position:absolute;left:235px;top:362px;" width="9" height="9" viewBox="0 0 9 9"><rect x="0.5" y="0.5" width="8" height="8" fill="#f8f8f8" stroke="#8a8a8a" stroke-width="1"/><path d="M2 4.5 H7" stroke="#333" stroke-width="1"/><path d="M4.5 2 V7" stroke="#333" stroke-width="1"/></svg>
<div style="position:absolute;left:250.40px;top:360.65px;font:700 11px/11px 'Liberation Sans', sans-serif;color:#000;white-space:nowrap;transform:scaleX(0.9714);transform-origin:0 0;">General Settings</div>
<svg style="position:absolute;left:235px;top:379px;" width="9" height="9" viewBox="0 0 9 9"><rect x="0.5" y="0.5" width="8" height="8" fill="#f8f8f8" stroke="#8a8a8a" stroke-width="1"/><path d="M2 4.5 H7" stroke="#333" stroke-width="1"/><path d="M4.5 2 V7" stroke="#333" stroke-width="1"/></svg>
<div style="position:absolute;left:250.40px;top:377.65px;font:700 11px/11px 'Liberation Sans', sans-serif;color:#000;white-space:nowrap;transform:scaleX(0.9654);transform-origin:0 0;">Pricing</div>
<svg style="position:absolute;left:235px;top:396px;" width="9" height="9" viewBox="0 0 9 9"><rect x="0.5" y="0.5" width="8" height="8" fill="#f8f8f8" stroke="#8a8a8a" stroke-width="1"/><path d="M2 4.5 H7" stroke="#333" stroke-width="1"/><path d="M4.5 2 V7" stroke="#333" stroke-width="1"/></svg>
<div style="position:absolute;left:250.40px;top:394.65px;font:700 11px/11px 'Liberation Sans', sans-serif;color:#000;white-space:nowrap;transform:scaleX(0.9878);transform-origin:0 0;">Online Ordering</div>
<svg style="position:absolute;left:235px;top:413px;" width="9" height="9" viewBox="0 0 9 9"><rect x="0.5" y="0.5" width="8" height="8" fill="#f8f8f8" stroke="#8a8a8a" stroke-width="1"/><path d="M2 4.5 H7" stroke="#333" stroke-width="1"/></svg>
<div style="position:absolute;left:250.40px;top:411.65px;font:700 11px/11px 'Liberation Sans', sans-serif;color:#000;white-space:nowrap;transform:scaleX(0.9672);transform-origin:0 0;">Prep Printers</div>
<div style="position:absolute;left:250.40px;top:428.65px;font:400 11px/11px 'Liberation Sans', sans-serif;color:#000;white-space:nowrap;-webkit-text-stroke:0.2px #000;">Pizza Printer</div>
<svg style="position:absolute;left:616px;top:428px;" width="13" height="13" viewBox="0 0 13 13"><rect x="0.5" y="0.5" width="12" height="12" fill="#fff" stroke="#8c8c8c" stroke-width="1"/><path d="M3 6.5 L5.5 9 L10 3.5" stroke="#222" stroke-width="2" fill="none"/></svg>
<div style="position:absolute;left:250.40px;top:445.65px;font:400 11px/11px 'Liberation Sans', sans-serif;color:#000;white-space:nowrap;-webkit-text-stroke:0.2px #000;">Subs Printer</div>
<svg style="position:absolute;left:616px;top:445px;" width="13" height="13" viewBox="0 0 13 13"><rect x="0.5" y="0.5" width="12" height="12" fill="#fff" stroke="#8c8c8c" stroke-width="1"/></svg>
<div style="position:absolute;left:250.40px;top:462.65px;font:400 11px/11px 'Liberation Sans', sans-serif;color:#000;white-space:nowrap;-webkit-text-stroke:0.2px #000;">Wings Printer</div>
<svg style="position:absolute;left:616px;top:462px;" width="13" height="13" viewBox="0 0 13 13"><rect x="0.5" y="0.5" width="12" height="12" fill="#fff" stroke="#8c8c8c" stroke-width="1"/></svg>
<div style="position:absolute;left:250.40px;top:479.65px;font:400 11px/11px 'Liberation Sans', sans-serif;color:#000;white-space:nowrap;-webkit-text-stroke:0.2px #000;">Salads Printer</div>
<svg style="position:absolute;left:616px;top:479px;" width="13" height="13" viewBox="0 0 13 13"><rect x="0.5" y="0.5" width="12" height="12" fill="#fff" stroke="#8c8c8c" stroke-width="1"/></svg>
<div style="position:absolute;left:250.40px;top:496.65px;font:400 11px/11px 'Liberation Sans', sans-serif;color:#000;white-space:nowrap;-webkit-text-stroke:0.2px #000;">Drinks Printer</div>
<svg style="position:absolute;left:616px;top:496px;" width="13" height="13" viewBox="0 0 13 13"><rect x="0.5" y="0.5" width="12" height="12" fill="#fff" stroke="#8c8c8c" stroke-width="1"/></svg>
<div style="position:absolute;left:250.40px;top:513.65px;font:400 11px/11px 'Liberation Sans', sans-serif;color:#000;white-space:nowrap;-webkit-text-stroke:0.2px #000;">Prep 6</div>
<svg style="position:absolute;left:616px;top:513px;" width="13" height="13" viewBox="0 0 13 13"><rect x="0.5" y="0.5" width="12" height="12" fill="#fff" stroke="#8c8c8c" stroke-width="1"/></svg>
<div style="position:absolute;left:250.40px;top:530.65px;font:400 11px/11px 'Liberation Sans', sans-serif;color:#000;white-space:nowrap;-webkit-text-stroke:0.2px #000;">Prep 7</div>
<svg style="position:absolute;left:616px;top:530px;" width="13" height="13" viewBox="0 0 13 13"><rect x="0.5" y="0.5" width="12" height="12" fill="#fff" stroke="#8c8c8c" stroke-width="1"/></svg>
<div style="position:absolute;left:250.40px;top:547.65px;font:400 11px/11px 'Liberation Sans', sans-serif;color:#000;white-space:nowrap;-webkit-text-stroke:0.2px #000;">Prep 8</div>
<svg style="position:absolute;left:616px;top:547px;" width="13" height="13" viewBox="0 0 13 13"><rect x="0.5" y="0.5" width="12" height="12" fill="#fff" stroke="#8c8c8c" stroke-width="1"/></svg>
<div style="position:absolute;left:250.40px;top:564.65px;font:400 11px/11px 'Liberation Sans', sans-serif;color:#000;white-space:nowrap;-webkit-text-stroke:0.2px #000;">Prep 9</div>
<svg style="position:absolute;left:616px;top:564px;" width="13" height="13" viewBox="0 0 13 13"><rect x="0.5" y="0.5" width="12" height="12" fill="#fff" stroke="#8c8c8c" stroke-width="1"/></svg>
<svg style="position:absolute;left:616px;top:579px;" width="13" height="3" viewBox="0 0 13 3"><rect x="0.5" y="0.5" width="12" height="5" fill="#fff" stroke="#8c8c8c" stroke-width="1"/></svg>
<div style="position:absolute;left:975px;top:357px;width:17px;height:225px;background:#efefef;"></div>
<div style="position:absolute;left:976px;top:375px;width:14px;height:80px;background:#cdcdcd;"></div>
<svg style="position:absolute;left:978px;top:364px;" width="10" height="7" viewBox="0 0 10 7"><path d="M1 6 L5 2 L9 6" stroke="#555" stroke-width="1.8" fill="none"/></svg>
<svg style="position:absolute;left:978px;top:570px;" width="10" height="7" viewBox="0 0 10 7"><path d="M1 1 L5 5 L9 1" stroke="#555" stroke-width="1.8" fill="none"/></svg>
<div style="position:absolute;left:239px;top:422px;width:399px;height:92px;background:#ffff4a;mix-blend-mode:multiply;border-radius:1px;"></div>
<div style="position:absolute;left:232px;top:586px;width:758px;height:56px;border:1px solid #d6d6d6;background:#fff;"></div>
<div style="position:absolute;left:238.20px;top:590.65px;font:700 11px/11px 'Liberation Sans', sans-serif;color:#111;white-space:nowrap;transform:scaleX(0.9529);transform-origin:0 0;">Pizza Printer</div>
<div style="position:absolute;left:238.20px;top:606.65px;font:400 11px/11px 'Liberation Sans', sans-serif;color:#111;white-space:nowrap;transform:scaleX(1.0487);transform-origin:0 0;-webkit-text-stroke:0.2px #111;">Check the box to print this menu item at Pizza Printer</div>
<div style="position:absolute;left:1px;top:673px;width:1022px;height:1px;background:#6f8fb8;"></div>
<div style="position:absolute;left:1px;top:674px;width:1022px;height:25px;background:#7f8c99;"></div>
<div style="position:absolute;left:11.00px;top:681.80px;font:700 12px/12px 'Liberation Sans', sans-serif;color:#ffffff;white-space:nowrap;transform:scaleX(0.9177);transform-origin:0 0;text-decoration:underline;">DEMO USER</div>
<div style="position:absolute;left:0px;top:0px;width:1024px;height:1px;background:#2d4e88;"></div>
<div style="position:absolute;left:0px;top:0px;width:1px;height:700px;background:#2d4e88;"></div>
<div style="position:absolute;left:1022px;top:0px;width:2px;height:700px;background:#2d4e88;"></div>
<div style="position:absolute;left:0px;top:699px;width:1024px;height:1px;background:#2d4e88;"></div>
</body></html>
